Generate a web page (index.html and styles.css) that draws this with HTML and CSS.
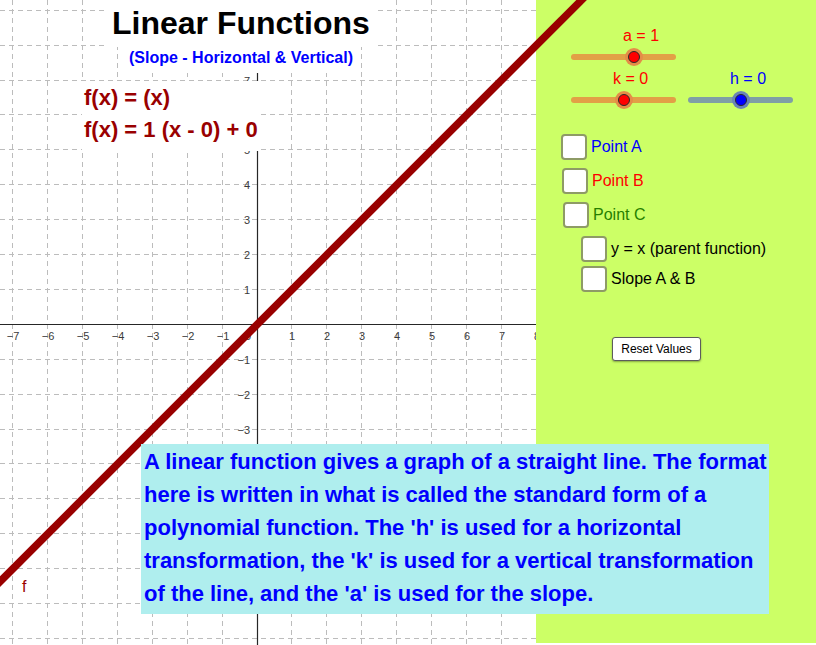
FILE: index.html
```html
<!DOCTYPE html>
<html lang="en">
<head>
    <meta charset="UTF-8">
    <meta name="viewport" content="width=device-width, initial-scale=1.0">
    <title>Linear Functions</title>
    <link rel="stylesheet" href="styles.css">
</head>
    <body>
        <div class="applet">
            <div class="graph">
                <svg class="grid" width="536" height="645">
                    <path class="grid_lines" d="M12.5 0V645 M47.5 0V645 M82.5 0V645 M117.5 0V645 M152.5 0V645 M187.5 0V645 M222.5 0V645 M291.5 0V645 M326.5 0V645 M361.5 0V645 M396.5 0V645 M431.5 0V645 M466.5 0V645 M501.5 0V645 M536.5 0V645
                        M0 10.5H536 M0 45.5H536 M0 80.5H536 M0 114.5H536 M0 149.5H536 M0 184.5H536 M0 219.5H536 M0 254.5H536 M0 289.5H536 M0 359.5H536 M0 394.5H536 M0 429.5H536 M0 463.5H536 M0 498.5H536 M0 533.5H536 M0 568.5H536 M0 603.5H536 M0 638.5H536"/>
                    <path class="axes" d="M0 324.5H536 M257.5 0V645"/>
                    <g class="x_labels">
                        <text x="13" y="340">−7</text>
                        <text x="48" y="340">−6</text>
                        <text x="83" y="340">−5</text>
                        <text x="118" y="340">−4</text>
                        <text x="153" y="340">−3</text>
                        <text x="188" y="340">−2</text>
                        <text x="223" y="340">−1</text>
                        <text x="292" y="340">1</text>
                        <text x="327" y="340">2</text>
                        <text x="362" y="340">3</text>
                        <text x="397" y="340">4</text>
                        <text x="432" y="340">5</text>
                        <text x="467" y="340">6</text>
                        <text x="502" y="340">7</text>
                        <text x="537" y="340">8</text>
                    </g>
                    <g class="y_labels">
                        <text x="251" y="340">0</text>
                        <text x="250" y="85">7</text>
                        <text x="250" y="154">5</text>
                        <text x="250" y="189">4</text>
                        <text x="250" y="224">3</text>
                        <text x="250" y="259">2</text>
                        <text x="250" y="294">1</text>
                        <text x="250" y="364">−1</text>
                        <text x="250" y="399">−2</text>
                        <text x="250" y="434">−3</text>
                    </g>
                </svg>

                <div class="title">Linear Functions</div>
                <div class="subtitle">(Slope - Horizontal &amp; Vertical)</div>
                <div class="formula">f(x) = (x)<br>f(x) = 1 (x - 0) + 0</div>
                <div class="curve_name">f</div>
                <div class="note">
                    A linear function gives a graph of a straight line. The format<br>
                    here is written in what is called the standard form of a<br>
                    polynomial function. The 'h' is used for a horizontal<br>
                    transformation, the 'k' is used for a vertical transformation<br>
                    of the line, and the 'a' is used for the slope.
                </div>
            </div>

            <div class="panel">
                <div class="slider_row">
                    <div class="slider slider_a">
                        <div class="slider_label">a = 1</div>
                        <div class="track"><span class="knob" style="left: 60%"></span></div>
                    </div>
                </div>
                <div class="slider_row second">
                    <div class="slider slider_k">
                        <div class="slider_label">k = 0</div>
                        <div class="track"><span class="knob" style="left: 50%"></span></div>
                    </div>
                    <div class="slider slider_h">
                        <div class="slider_label">h = 0</div>
                        <div class="track"><span class="knob" style="left: 50%"></span></div>
                    </div>
                </div>

                <div class="checks">
                    <label class="check point_a"><input type="checkbox"><span>Point A</span></label>
                    <label class="check point_b"><input type="checkbox"><span>Point B</span></label>
                    <label class="check point_c"><input type="checkbox"><span>Point C</span></label>
                    <div class="sub_checks">
                        <label class="check"><input type="checkbox"><span>y = x (parent function)</span></label>
                        <label class="check"><input type="checkbox"><span>Slope A &amp; B</span></label>
                    </div>
                </div>

                <button class="reset" type="button">Reset Values</button>
            </div>

            <svg class="line_f" width="816" height="645">
                <line x1="-20" y1="601.6" x2="620" y2="-38.4"/>
            </svg>
        </div>
    </body>
</html>
```

FILE: styles.css
```css
body {
    margin: 0;
    background-color: #ffffff;
    font-family: "Liberation Sans", Arial, sans-serif;
}

.applet {
    position: relative;
    display: flex;
    width: 816px;
    height: 645px;
    overflow: hidden;
}

.graph {
    position: relative;
    flex: none;
    width: 536px;
    height: 645px;
    background-color: #ffffff;
}

.grid {
    display: block;
}

.grid_lines {
    fill: none;
    stroke: #bcbcbc;
    stroke-width: 1;
    stroke-dasharray: 5 4;
}

.axes {
    fill: none;
    stroke: #262626;
    stroke-width: 1.2;
}

.grid text {
    font-family: "Liberation Sans", Arial, sans-serif;
    font-size: 11px;
    fill: #3a3a3a;
}

.x_labels text {
    text-anchor: middle;
}

.y_labels text {
    text-anchor: end;
}

/* text objects on the canvas */
.title {
    position: absolute;
    left: 108px;
    top: 0;
    padding: 0 4px;
    line-height: 47px;
    font-size: 32px;
    font-weight: bold;
    color: #000000;
    background-color: #ffffff;
    white-space: nowrap;
}

.subtitle {
    position: absolute;
    left: 124px;
    top: 47px;
    padding: 0 5px 4px;
    line-height: 22px;
    font-size: 16px;
    font-weight: bold;
    color: #0000ff;
    background-color: #ffffff;
    white-space: nowrap;
}

.formula {
    position: absolute;
    left: 82px;
    top: 81px;
    padding: 1px 3px 5px 2px;
    line-height: 32px;
    font-size: 22px;
    font-weight: bold;
    color: #990000;
    background-color: #ffffff;
    white-space: nowrap;
}

.curve_name {
    position: absolute;
    left: 22px;
    top: 577px;
    line-height: 20px;
    font-size: 16px;
    color: #990000;
}

.note {
    position: absolute;
    z-index: 2;
    left: 141px;
    top: 444px;
    width: 628px;
    height: 170px;
    box-sizing: border-box;
    padding: 1px 3px 4px;
    line-height: 33px;
    font-size: 22px;
    font-weight: bold;
    color: #0000ff;
    background-color: #afeeee;
    white-space: nowrap;
}

.line_f {
    position: absolute;
    z-index: 1;
    left: 0;
    top: 0;
    pointer-events: none;
}

.line_f line {
    stroke: #990000;
    stroke-width: 7.5;
}

/* right panel */
.panel {
    flex: none;
    width: 280px;
    height: 643px;
    box-sizing: border-box;
    padding-top: 26px;
    background-color: #ccff66;
    font-size: 16px;
}

.slider_row {
    display: flex;
    gap: 12px;
    margin-left: 35px;
}

.slider_row.second {
    margin-top: 9px;
}

.slider {
    width: 105px;
}

.slider_label {
    height: 20px;
    line-height: 20px;
    white-space: nowrap;
    color: #ff0000;
    padding-left: 42px;
}

.slider_a .slider_label {
    padding-left: 52px;
}

.slider_h .slider_label {
    color: #0000ff;
}

.track {
    position: relative;
    height: 6px;
    margin-top: 8px;
    border-radius: 3px;
    background-color: #e2a046;
}

.slider_h .track {
    background-color: #7f9fa6;
}

.knob {
    position: absolute;
    top: 50%;
    width: 12px;
    height: 12px;
    margin: -6px 0 0 -6px;
    box-sizing: border-box;
    border: 1px solid #2a2a2a;
    border-radius: 50%;
    background-color: #ff0000;
    box-shadow: 0 0 0 3px #e48c48;
}

.slider_h .knob {
    background-color: #0000ff;
    box-shadow: 0 0 0 3px #6a84b6;
}

.checks {
    display: flex;
    flex-direction: column;
    gap: 8px;
    margin: 31px 0 0 25px;
}

.sub_checks {
    display: flex;
    flex-direction: column;
    gap: 4px;
    margin-left: 20px;
}

.check {
    display: flex;
    align-items: center;
    gap: 4px;
    height: 26px;
    white-space: nowrap;
    color: #000000;
}

.check input {
    appearance: none;
    width: 26px;
    height: 26px;
    margin: 0;
    box-sizing: border-box;
    border: 2px solid #8e9b66;
    border-radius: 4px;
    background-color: #ffffff;
}

.point_a {
    color: #0000ff;
}

.point_b {
    color: #ff0000;
    margin-left: 1px;
}

.point_c {
    color: #267f00;
    margin-left: 2px;
}

.reset {
    display: block;
    width: 89px;
    height: 24px;
    margin: 45px 0 0 76px;
    padding: 0;
    font-family: "Liberation Sans", Arial, sans-serif;
    font-size: 12px;
    color: #000000;
    background-color: #ffffff;
    border: 1px solid #5c5c5c;
    border-radius: 3px;
    box-shadow: 0 1px 2px rgba(0, 0, 0, 0.35);
}
```
